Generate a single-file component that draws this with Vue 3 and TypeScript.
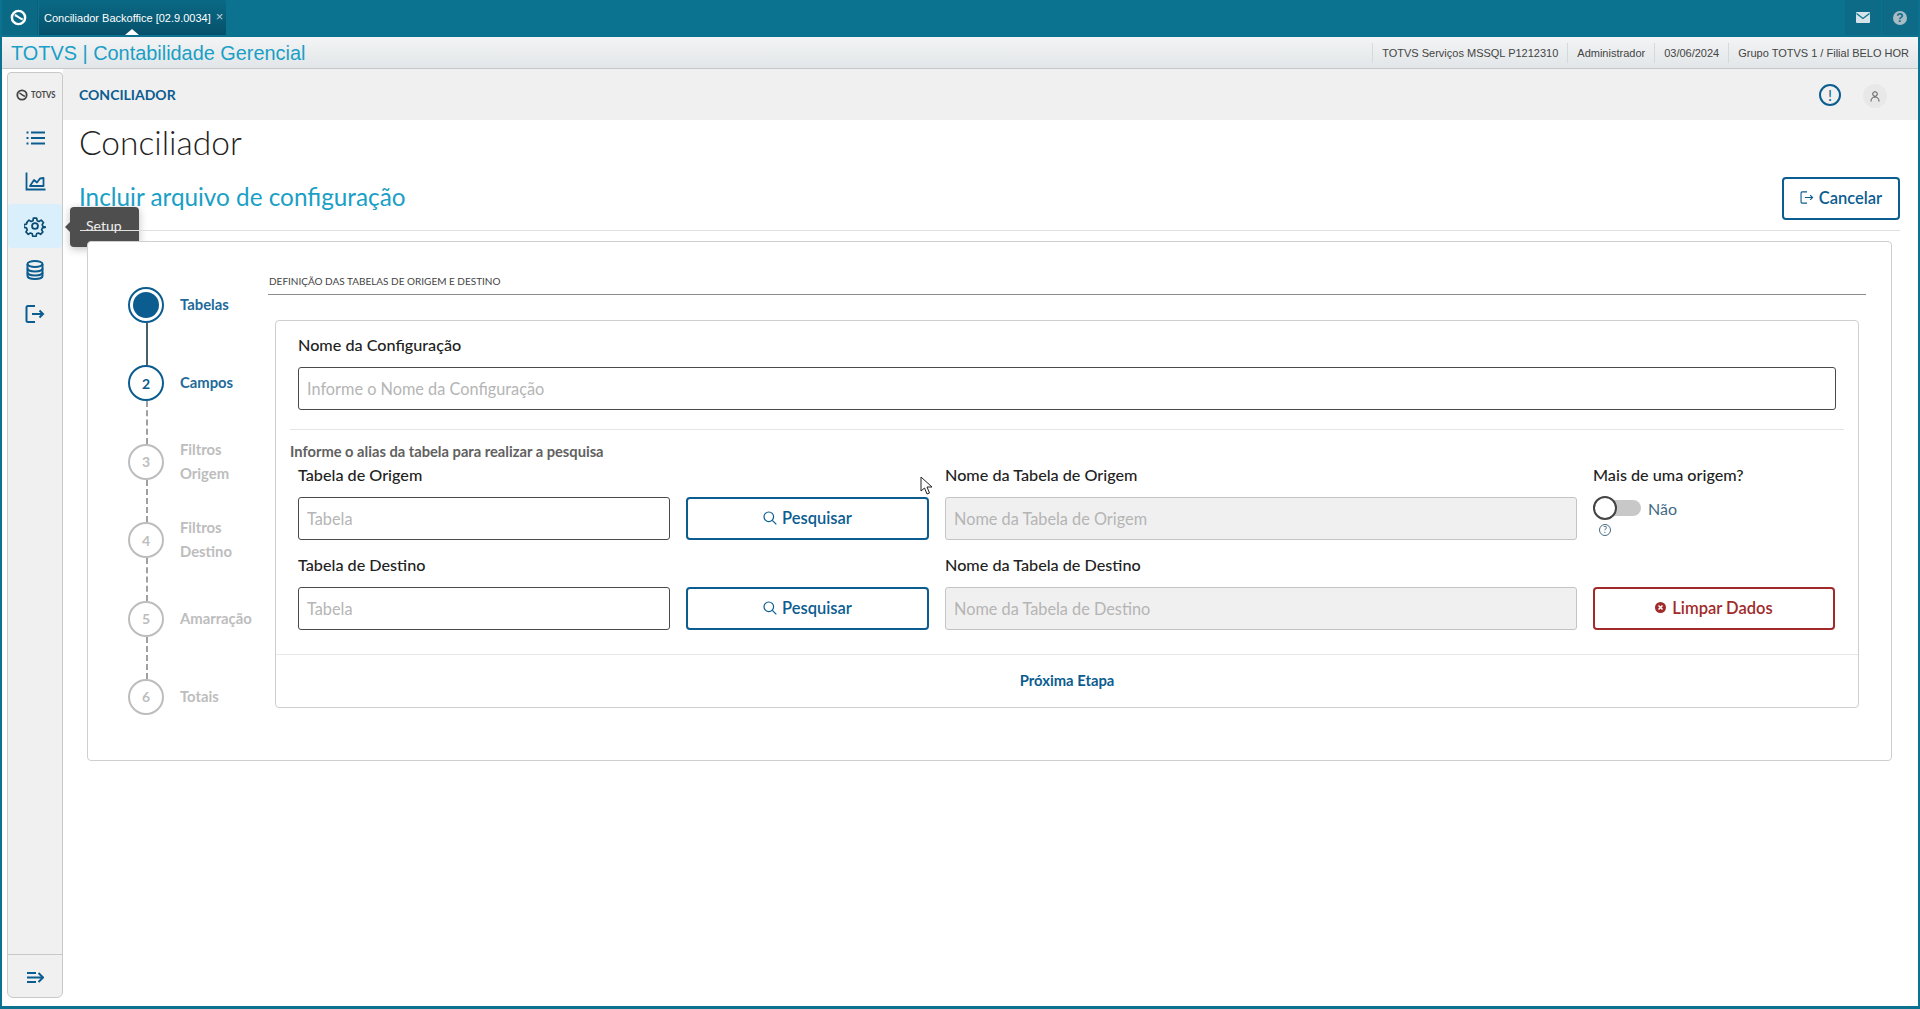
<script setup lang="ts">
interface Step { n: string; lines: string[]; state: 'done' | 'active' | 'off'; link: 'solid' | 'dash' | 'none' }
const steps: Step[] = [
  { n: '', lines: ['Tabelas'], state: 'done', link: 'solid' },
  { n: '2', lines: ['Campos'], state: 'active', link: 'dash' },
  { n: '3', lines: ['Filtros', 'Origem'], state: 'off', link: 'dash' },
  { n: '4', lines: ['Filtros', 'Destino'], state: 'off', link: 'dash' },
  { n: '5', lines: ['Amarração'], state: 'off', link: 'dash' },
  { n: '6', lines: ['Totais'], state: 'off', link: 'none' },
]
const infoItems = ['TOTVS Serviços MSSQL P1212310', 'Administrador', '03/06/2024', 'Grupo TOTVS 1 / Filial BELO HOR']
</script>

<template>
  <div class="frame">
    <header class="topbar">
      <div class="logo-tab">
        <svg width="17" height="17" viewBox="0 0 18 18" fill="none" stroke="#fff"><circle cx="9" cy="9" r="7" stroke-width="2.600"/><path d="M5 6.500C7.500 6.500 10 10.500 13.500 11" stroke-width="2.200"/></svg>
      </div>
      <div class="app-tab">
        <span>Conciliador Backoffice [02.9.0034]</span>
        <span class="tab-x">×</span>
        <i class="tab-caret"></i>
      </div>
      <div class="top-spacer"></div>
      <div class="top-cell">
        <svg width="14" height="11" viewBox="0 0 14 11"><rect width="14" height="11" rx="1" fill="#d6e4ea"/><path d="M0.500 1.500L7 6.500L13.500 1.500" fill="none" stroke="#0b7290" stroke-width="1.300"/></svg>
      </div>
      <div class="top-cell">
        <span class="help-dot">?</span>
      </div>
    </header>

    <div class="subheader">
      <div class="brand">TOTVS | Contabilidade Gerencial</div>
      <div class="info">
        <span v-for="item in infoItems" :key="item" class="info-item">{{ item }}</span>
      </div>
    </div>

    <div class="body">
      <aside class="sidebar">
        <div class="side-logo">
          <svg width="12" height="12" viewBox="0 0 18 18" fill="none" stroke="#444"><circle cx="9" cy="9" r="7" stroke-width="2.800"/><path d="M5 6.500C7.500 6.500 10 10.500 13.500 11" stroke-width="2.200"/></svg>
          <span class="side-logo-text">TOTVS</span>
        </div>
        <nav class="side-nav">
          <div class="side-item">
            <svg width="19" height="14" viewBox="0 0 19 14" fill="none" stroke="#0b5d90" stroke-width="1.900"><path d="M5 1.500H19M5 7H19M5 12.500H19"/><path d="M0.500 1.500H2.500M0.500 7H2.500M0.500 12.500H2.500"/></svg>
          </div>
          <div class="side-item">
            <svg class="chart-icon" width="21" height="19" viewBox="0 0 21 19" fill="none" stroke="#0b5d90" stroke-width="1.800"><path d="M1.500 0.500V17.500H20.500"/><path d="M5 14L9 8L12 10.500L15 6.500L18.500 6V14Z" stroke-linejoin="round"/></svg>
          </div>
          <div class="side-item active">
            <svg width="22" height="22" viewBox="0 0 24 24" fill="none" stroke="#0b4a72" stroke-width="2" stroke-linejoin="round"><path d="M10 2.500h4l.6 3 2.300 1 2.600-1.600 2.800 2.900-1.600 2.500 1 2.400 3 .6-.7 0v.4l-3 .6-1 2.400 1.600 2.500-2.800 2.900-2.600-1.600-2.300 1-.6 3h-4l-.6-3-2.300-1-2.600 1.600-2.800-2.900 1.600-2.500-1-2.400-3-.6v-3.400l3-.6 1-2.400L1.900 7.800l2.800-2.900 2.600 1.600 2.300-1z" transform="translate(1.200 1.200) scale(.9)"/><circle cx="12" cy="12" r="3.200"/></svg>
            <div class="tooltip">Setup</div>
          </div>
          <div class="side-item">
            <svg width="18" height="20" viewBox="0 0 18 20" fill="none" stroke="#0b5d90" stroke-width="2"><ellipse cx="9" cy="4" rx="7.500" ry="3"/><path d="M1.500 4V16C1.500 17.700 4.900 19 9 19S16.500 17.700 16.500 16V4"/><path d="M1.500 8.500C1.500 10.200 4.900 11.500 9 11.500S16.500 10.200 16.500 8.500M1.500 12.500C1.500 14.200 4.900 15.500 9 15.500S16.500 14.200 16.500 12.500"/></svg>
          </div>
          <div class="side-item">
            <svg width="20" height="18" viewBox="0 0 20 18" fill="none" stroke="#0b5d90" stroke-width="2"><path d="M10 1H3C2 1 1.500 1.500 1.500 2.500V15.500C1.500 16.500 2 17 3 17H10"/><path d="M7 9H18M14.500 5.500L18 9L14.500 12.500"/></svg>
          </div>
        </nav>
        <div class="side-foot">
          <svg width="17" height="13" viewBox="0 0 17 13" fill="none" stroke="#0b5d90" stroke-width="2"><path d="M0 2H9M0 6.500H15M0 11H9"/><path d="M11.500 2L16 6.500L11.500 11"/></svg>
        </div>
      </aside>

      <main class="main">
        <div class="band">
          <span class="band-title">CONCILIADOR</span>
          <div class="band-icons">
            <span class="alert">!</span>
            <span class="avatar">
              <svg width="10" height="11" viewBox="0 0 10 11" fill="none" stroke="#555" stroke-width="1"><circle cx="5" cy="3" r="2.300"/><path d="M1 10.500C1 7.500 2.500 6 5 6S9 7.500 9 10.500"/></svg>
            </span>
          </div>
        </div>

        <div class="content">
          <h1 class="page-title">Conciliador</h1>
          <div class="sub-row">
            <h2 class="page-sub">Incluir arquivo de configuração</h2>
            <button class="btn btn-cancel">
              <svg width="14" height="13" viewBox="0 0 20 18" fill="none" stroke="#0b5d90" stroke-width="1.600"><path d="M10 1H3C2 1 1.500 1.500 1.500 2.500V15.500C1.500 16.500 2 17 3 17H10"/><path d="M7 9H18M14.500 5.500L18 9L14.500 12.500"/></svg>
              Cancelar
            </button>
          </div>

          <section class="card">
            <ol class="stepper">
              <li v-for="s in steps" :key="s.lines[0] + s.n" class="step" :class="s.state">
                <div class="marker">
                  <span class="circle"><i v-if="s.state === 'done'" class="dot"></i>{{ s.n }}</span>
                  <span class="link" :class="s.link"></span>
                </div>
                <div class="step-label">
                  <span v-for="l in s.lines" :key="l">{{ l }}</span>
                </div>
              </li>
            </ol>

            <div class="form-area">
              <div class="form-title">DEFINIÇÃO DAS TABELAS DE ORIGEM E DESTINO</div>
              <div class="form-card">
                <div class="form-top">
                  <label class="lbl">Nome da Configuração</label>
                  <input class="inp" placeholder="Informe o Nome da Configuração" />
                </div>
                <div class="hint-block">
                  <div class="hint">Informe o alias da tabela para realizar a pesquisa</div>
                </div>
                <div class="grid">
                  <div class="cell">
                    <label class="lbl">Tabela de Origem</label>
                    <input class="inp" placeholder="Tabela" />
                  </div>
                  <div class="cell end">
                    <button class="btn btn-search">
                      <svg width="14" height="14" viewBox="0 0 14 14" fill="none" stroke="#0b5d90" stroke-width="1.200"><circle cx="5.800" cy="5.800" r="4.800"/><path d="M9.300 9.300L13.300 13.300"/></svg>
                      Pesquisar
                    </button>
                  </div>
                  <div class="cell">
                    <label class="lbl">Nome da Tabela de Origem</label>
                    <input class="inp" placeholder="Nome da Tabela de Origem" disabled />
                  </div>
                  <div class="cell">
                    <label class="lbl">Mais de uma origem?</label>
                    <div class="switch-row">
                      <span class="track"><i class="knob"></i></span>
                      <span class="switch-text">Não</span>
                    </div>
                    <span class="q-mark">?</span>
                  </div>

                  <div class="cell">
                    <label class="lbl">Tabela de Destino</label>
                    <input class="inp" placeholder="Tabela" />
                  </div>
                  <div class="cell end">
                    <button class="btn btn-search">
                      <svg width="14" height="14" viewBox="0 0 14 14" fill="none" stroke="#0b5d90" stroke-width="1.200"><circle cx="5.800" cy="5.800" r="4.800"/><path d="M9.300 9.300L13.300 13.300"/></svg>
                      Pesquisar
                    </button>
                  </div>
                  <div class="cell">
                    <label class="lbl">Nome da Tabela de Destino</label>
                    <input class="inp" placeholder="Nome da Tabela de Destino" disabled />
                  </div>
                  <div class="cell end">
                    <button class="btn btn-danger">
                      <svg width="11" height="11" viewBox="0 0 11 11"><circle cx="5.500" cy="5.500" r="5.500" fill="#a12b2b"/><path d="M3.500 3.500L7.500 7.500M7.500 3.500L3.500 7.500" stroke="#fff" stroke-width="1.500"/></svg>
                      Limpar Dados
                    </button>
                  </div>
                </div>
                <div class="form-foot">Próxima Etapa</div>
              </div>
            </div>
          </section>
        </div>
      </main>
    </div>

    <svg class="cursor" width="13" height="20" viewBox="0 0 13 20"><path d="M1 1V15L4.500 12L7 18L9.500 17L7 11H12Z" fill="#fff" stroke="#222" stroke-width="1"/></svg>
  </div>
</template>

<style>
html, body { margin: 0; padding: 0; background: #fff; overflow: hidden; }
</style>

<style scoped>
.frame {
  position: relative;
  box-sizing: border-box;
  width: 1920px;
  height: 1009px;
  display: flex;
  flex-direction: column;
  border-left: 2px solid #0b7290;
  border-right: 2px solid #0b7290;
  border-bottom: 3px solid #0b7290;
  background: #fff;
  font-family: "Lato", "Open Sans", sans-serif;
  overflow: hidden;
}
.topbar {
  flex: 0 0 37px;
  margin: 0 -2px;
  padding-right: 2px;
  display: flex;
  background: #0b7290;
  font-family: "Liberation Sans", Arial, sans-serif;
}
.logo-tab {
  width: 37px;
  height: 35px;
  display: flex;
  align-items: center;
  justify-content: center;
  background: #0a6a86;
  border-right: 1px solid #0a5e78;
}
.app-tab {
  position: relative;
  margin-left: 1px;
  width: 187px;
  height: 35px;
  box-sizing: border-box;
  padding: 0 0 0 5px;
  display: flex;
  align-items: center;
  gap: 5px;
  font-size: 11px;
  color: #fff;
  background: linear-gradient(#0a6a86, #06506a);
}
.tab-x { color: #b9d0d9; font-size: 13px; margin-top: -3px; }
.tab-caret {
  position: absolute;
  left: 86px;
  bottom: 0;
  border-left: 7px solid transparent;
  border-right: 7px solid transparent;
  border-bottom: 6px solid #fff;
}
.top-spacer { flex: 1; }
.top-cell {
  width: 36px;
  height: 35px;
  margin-left: 1px;
  background: #0e6b87;
  display: flex;
  align-items: center;
  justify-content: center;
}
.help-dot {
  width: 14px;
  height: 14px;
  border-radius: 50%;
  background: #a8bcc5;
  color: #0e6b87;
  font-size: 12px;
  font-weight: 700;
  line-height: 14px;
  text-align: center;
}
.subheader {
  flex: 0 0 32px;
  box-sizing: border-box;
  display: flex;
  justify-content: space-between;
  align-items: center;
  padding-top: 1px;
  background: linear-gradient(#f2f4f5, #e3e6e8);
  border-bottom: 1px solid #c4c8ca;
  font-family: "Liberation Sans", Arial, sans-serif;
}
.brand { margin-left: 9px; font-size: 19.900px; color: #1a9fc6; }
.info { display: flex; height: 20px; align-items: center; padding-right: 9px; }
.info-item {
  font-size: 11px;
  color: #444;
  line-height: 20px;
  padding: 0 9px;
  border-left: 1px solid #d6d9db;
}
.info-item:last-child { padding-right: 0; }
.body { flex: 1; display: flex; min-height: 0; }
.sidebar {
  position: relative;
  z-index: 1;
  box-sizing: border-box;
  width: 56px;
  margin: 3px 0 8px 5px;
  display: flex;
  flex-direction: column;
  background: #f0f0f0;
  border: 1px solid #c9c9c9;
  border-top-left-radius: 4px;
  border-top-right-radius: 4px;
  border-bottom-left-radius: 6px;
  border-bottom-right-radius: 6px;
}
.side-logo {
  height: 43px;
  box-sizing: border-box;
  padding-left: 5px;
  display: flex;
  align-items: center;
  justify-content: center;
  gap: 3px;
  font-size: 9px;
  font-weight: 700;
  color: #444;
}
.side-logo-text { transform: scaleX(.85); transform-origin: left center; }
.side-nav { flex: 1; }
.side-item {
  position: relative;
  height: 44px;
  display: flex;
  align-items: center;
  justify-content: center;
}
.chart-icon { margin-top: -2px; }
.side-item.active { background: #d9effc; border-radius: 4px; }
.tooltip {
  position: absolute;
  left: 62px;
  top: 3px;
  box-sizing: border-box;
  width: 69px;
  height: 40px;
  border-radius: 4px;
  background: #4e4e4e;
  color: #eee;
  font-size: 14px;
  line-height: 38px;
  padding-left: 16px;
  box-shadow: 0 2px 8px rgba(0,0,0,.25);
}
.tooltip::before {
  content: "";
  position: absolute;
  left: -5px;
  top: 15px;
  border-top: 5px solid transparent;
  border-bottom: 5px solid transparent;
  border-right: 5px solid #4e4e4e;
}
.side-foot {
  box-sizing: border-box;
  height: 43px;
  padding-top: 2px;
  border-top: 1px solid #c9c9c9;
  display: flex;
  align-items: center;
  justify-content: center;
}
.main { flex: 1; min-width: 0; display: flex; flex-direction: column; }
.band {
  flex: 0 0 51px;
  box-sizing: border-box;
  display: flex;
  align-items: center;
  justify-content: space-between;
  padding: 0 0 0 16px;
  background: #f0f0f0;
}
.band-title { font-size: 14px; font-weight: 700; color: #0b5d90; }
.band-icons { display: flex; align-items: center; gap: 22px; padding-right: 31px; }
.alert {
  box-sizing: border-box;
  width: 22px;
  height: 22px;
  border-radius: 50%;
  border: 2px solid #0b5d90;
  color: #0b5d90;
  text-align: center;
  font-size: 15px;
  line-height: 18px;
}
.avatar {
  width: 24px;
  height: 24px;
  margin-top: 3px;
  border-radius: 50%;
  background: #e8e8e8;
  display: flex;
  align-items: center;
  justify-content: center;
}
.content {
  position: relative;
  z-index: 2;
  flex: 1;
  padding: 0 18px 0 17px;
}
.page-title {
  margin: 0 0 0 -1px;
  height: 54px;
  font-size: 33.500px;
  line-height: 44px;
  font-weight: 300;
  color: #222;
}
.sub-row {
  display: flex;
  align-items: center;
  justify-content: space-between;
  padding-bottom: 10px;
  border-bottom: 1px solid #e0e0e0;
  margin-top: 3px;
}
.page-sub { margin: 0 0 0 -1px; padding-bottom: 4px; font-size: 24.300px; font-weight: 400; color: #1a9fc6; }
.btn {
  box-sizing: border-box;
  background: #fff;
  border-radius: 4px;
  font-family: inherit;
  font-size: 16.500px;
  font-weight: 600;
  display: flex;
  align-items: center;
  justify-content: center;
  gap: 5px;
  height: 43px;
  padding: 0 0 2px;
}
.btn-cancel { width: 118px; border: 2px solid #0b5d90; color: #0b5d90; }
.btn-search { width: 243px; border: 2px solid #0b5d90; color: #0b5d90; }
.btn-danger { width: 242px; gap: 6px; border: 2px solid #a12b2b; color: #a12b2b; }
.card {
  box-sizing: border-box;
  margin: 10px 8px 0 7px;
  height: 520px;
  border: 1px solid #cfcfcf;
  border-radius: 4px;
  background: #fff;
  display: flex;
}
.stepper {
  list-style: none;
  margin: 45px 0 0 0;
  padding: 0 0 0 40px;
  box-sizing: content-box;
  width: 140px;
}
.step { display: flex; height: 78.400px; gap: 16px; }
.marker { width: 36px; display: flex; flex-direction: column; align-items: center; }
.circle {
  box-sizing: border-box;
  flex: 0 0 36px;
  width: 36px;
  border-radius: 50%;
  border: 2px solid #bdbdbd;
  color: #bdbdbd;
  font-size: 14px;
  font-weight: 700;
  display: flex;
  align-items: center;
  justify-content: center;
  background: #fff;
}
.step.done .circle, .step.active .circle { border-color: #0b5d90; color: #0b5d90; }
.dot { width: 26px; height: 26px; border-radius: 50%; background: #0b5d90; }
.link { flex: 1; width: 0; margin-left: 2px; }
.link.solid { border-left: 2px solid #48606e; }
.link.dash { border-left: 2px dashed #a0a0a0; }
.step-label {
  display: flex;
  flex-direction: column;
  justify-content: center;
  height: 36px;
  font-size: 14.800px;
  font-weight: 700;
  line-height: 24px;
  margin-top: -1px;
  color: #bdbdbd;
  white-space: nowrap;
}
.step.done .step-label, .step.active .step-label { color: #1d6a9a; }
.form-area { flex: 1; min-width: 0; padding-right: 25px; }
.form-title {
  box-sizing: border-box;
  height: 53px;
  padding: 32px 0 0 1px;
  font-size: 10px;
  line-height: 14px;
  color: #444;
  border-bottom: 1px solid #8d8d8d;
}
.form-card {
  box-sizing: border-box;
  margin: 25px 7px 0 7px;
  height: 388px;
  border: 1px solid #cfcfcf;
  border-radius: 4px;
  display: flex;
  flex-direction: column;
}
.form-top { padding: 12px 22px 0 22px; display: flex; flex-direction: column; }
.lbl { display: block; height: 24px; line-height: 24px; font-size: 16.200px; font-weight: 500; color: #222; }
.inp {
  box-sizing: border-box;
  display: block;
  width: 100%;
  height: 43px;
  margin-top: 10px;
  padding: 0 8px;
  border: 1px solid #4a4a4a;
  border-radius: 3px;
  background: #fff;
  font-family: inherit;
  font-size: 16.300px;
  outline: none;
}
.inp::placeholder { color: #b5b5b5; opacity: 1; }
.inp:disabled { background: #f0f0f0; border-color: #c4c4c4; }
.hint-block {
  margin: 19px 14px 0;
  border-top: 1px solid #e4e4e4;
  padding-top: 10px;
}
.hint { font-size: 14.700px; font-weight: 700; line-height: 22px; color: #616161; }
.grid {
  display: grid;
  grid-template-columns: 372px 243px 632px 242px;
  column-gap: 16px;
  row-gap: 13px;
  padding: 1px 22px 0;
}
.cell { position: relative; display: flex; flex-direction: column; height: 77px; }
.cell.end { justify-content: flex-end; }
.switch-row { display: flex; align-items: center; margin-top: 9px; height: 24px; gap: 7px; }
.track {
  position: relative;
  width: 48px;
  height: 16px;
  border-radius: 8px;
  background: #c8c8c8;
  display: block;
}
.knob {
  position: absolute;
  left: 0;
  top: -4px;
  box-sizing: border-box;
  width: 24px;
  height: 24px;
  border-radius: 50%;
  background: #fff;
  border: 2px solid #444;
}
.switch-text { font-size: 16px; color: #3f6a86; }
.q-mark {
  box-sizing: border-box;
  width: 12px;
  height: 12px;
  margin: 4px 0 0 6px;
  border-radius: 50%;
  border: 1px solid #466a80;
  color: #466a80;
  font-size: 9px;
  line-height: 10px;
  text-align: center;
}
.form-foot {
  margin-top: 24px;
  padding-bottom: 3px;
  flex: 1;
  border-top: 1px solid #e8e8e8;
  display: flex;
  align-items: center;
  justify-content: center;
  font-size: 14.800px;
  font-weight: 700;
  color: #0b5d90;
}
.cursor { position: absolute; left: 918px; top: 476px; z-index: 5; }
</style>
